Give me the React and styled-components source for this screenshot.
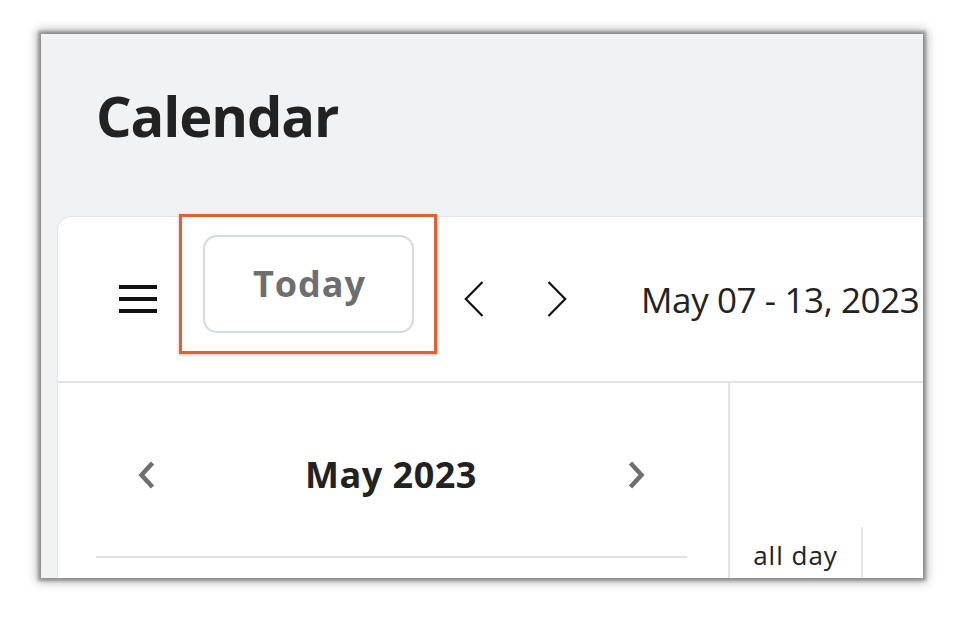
import React from 'react';
import styled, { createGlobalStyle } from 'styled-components';

const GlobalStyle = createGlobalStyle`
  html, body {
    margin: 0;
    padding: 0;
    background: #ffffff;
  }
  body {
    font-family: "Open Sans", "Noto Sans", sans-serif;
  }
`

const Page = styled.div`
  padding: 34px 0 0 41px;
  height: 630px;
  box-sizing: border-box;
`

const Frame = styled.div`
  width: 882px;
  height: 544px;
  background: #f1f2f4;
  box-shadow: 0 0 3px 3px rgba(0, 0, 0, 0.3), 0 0 10px 4px rgba(0, 0, 0, 0.28);
  overflow: hidden;
  display: flex;
  flex-direction: column;
`

const Header = styled.header`
  height: 182px;
  flex-shrink: 0;
  box-sizing: border-box;
  padding: 53px 0 0 55px;
`

const Title = styled.h1`
  margin: 0;
  font-size: 56px;
  line-height: 56px;
  font-weight: 700;
  color: #222222;
  letter-spacing: -1.1px;
`

const Card = styled.section`
  width: 1000px;
  margin-left: 16px;
  flex: 1;
  background: #ffffff;
  border-top: 1px solid #e3e5e9;
  border-left: 1px solid #e3e5e9;
  border-top-left-radius: 14px;
  display: flex;
  flex-direction: column;
`

const Toolbar = styled.div`
  height: 164px;
  flex-shrink: 0;
  display: flex;
  align-items: center;
  padding-left: 61px;
  border-bottom: 2px solid #e3e3e3;
`

const MenuIcon = styled.svg`
  display: block;
  flex-shrink: 0;
`

const ButtonWrap = styled.div`
  position: relative;
  margin: 0 50px 30px 46px;
`

const TodayButton = styled.button`
  width: 211px;
  height: 98px;
  box-sizing: border-box;
  border: 2px solid #d6d8e4;
  border-radius: 14px;
  background: #ffffff;
  font-family: "Open Sans", "Noto Sans", sans-serif;
  font-size: 36px;
  font-weight: 700;
  letter-spacing: 1px;
  color: #6e6e6e;
  padding: 0 0 2px 2px;
`

const Highlight = styled.div`
  position: absolute;
  left: -24px;
  top: -21px;
  width: 258px;
  height: 140px;
  box-sizing: border-box;
  border: 3px solid #e2622d;
  box-shadow: 0 1px 3px rgba(0, 0, 0, 0.25);
  pointer-events: none;
`

const NavGroup = styled.div`
  display: flex;
  align-items: center;
  gap: 63px;
  margin-right: 74px;
`

const Chevron = styled.svg`
  display: block;
  flex-shrink: 0;
`

const RangeLabel = styled.div`
  font-size: 35px;
  line-height: 35px;
  color: #222222;
  letter-spacing: -0.4px;
  white-space: nowrap;
`

const Body = styled.div`
  flex: 1;
  display: grid;
  grid-template-columns: 672px 1fr;
`

const Sidebar = styled.aside`
  border-right: 2px solid #e3e3e3;
  padding: 0 41px 0 38px;
`

const MonthHeader = styled.div`
  display: flex;
  align-items: center;
  justify-content: space-between;
  padding: 0 41px;
  margin-top: 74px;
  height: 36px;
`

const MonthLabel = styled.div`
  font-size: 36px;
  line-height: 36px;
  font-weight: 700;
  color: #222222;
  letter-spacing: 0.5px;
  margin-right: 1px;
`

const Divider = styled.hr`
  margin: 63px 0 0;
  border: none;
  height: 2px;
  background: #e2e2e2;
`

const WeekArea = styled.div`
  display: flex;
  flex-direction: column;
`

const WeekHeader = styled.div`
  height: 144px;
`

const AllDayRow = styled.div`
  display: flex;
  flex: 1;
`

const AllDayCell = styled.div`
  width: 131px;
  border-right: 2px solid #e6e6e6;
  padding-top: 15px;
  text-align: center;
  font-size: 26px;
  line-height: 26px;
  letter-spacing: 1px;
  color: #222222;
`

const SmallChevron = ({ dir }) => (
  <Chevron width="19" height="30" viewBox="0 0 19 30">
    <path
      d={dir === 'left' ? 'M15.5 3 L4.5 15 L15.5 27' : 'M3.5 3 L14.5 15 L3.5 27'}
      fill="none"
      stroke="#6f6f6f"
      strokeWidth="4.5"
    />
  </Chevron>
)

const ThinChevron = ({ dir }) => (
  <Chevron width="20" height="36" viewBox="0 0 20 36">
    <path
      d={dir === 'left' ? 'M18.5 1 L1.8 18 L18.5 35' : 'M1.5 1 L18.2 18 L1.5 35'}
      fill="none"
      stroke="#111111"
      strokeWidth="2.2"
    />
  </Chevron>
)

const App = () => {
  return (
    <>
      <GlobalStyle />
      <Page>
        <Frame>
          <Header>
            <Title>Calendar</Title>
          </Header>
          <Card>
            <Toolbar>
              <MenuIcon width="38" height="28" viewBox="0 0 38 28">
                <rect x="0" y="0" width="38" height="4" fill="#111" />
                <rect x="0" y="12" width="38" height="4" fill="#111" />
                <rect x="0" y="24" width="38" height="4" fill="#111" />
              </MenuIcon>
              <ButtonWrap>
                <TodayButton>Today</TodayButton>
                <Highlight />
              </ButtonWrap>
              <NavGroup>
                <ThinChevron dir="left" />
                <ThinChevron dir="right" />
              </NavGroup>
              <RangeLabel>May 07 - 13, 2023</RangeLabel>
            </Toolbar>
            <Body>
              <Sidebar>
                <MonthHeader>
                  <SmallChevron dir="left" />
                  <MonthLabel>May 2023</MonthLabel>
                  <SmallChevron dir="right" />
                </MonthHeader>
                <Divider />
              </Sidebar>
              <WeekArea>
                <WeekHeader />
                <AllDayRow>
                  <AllDayCell>all day</AllDayCell>
                </AllDayRow>
              </WeekArea>
            </Body>
          </Card>
        </Frame>
      </Page>
    </>
  )
}

export default App;
